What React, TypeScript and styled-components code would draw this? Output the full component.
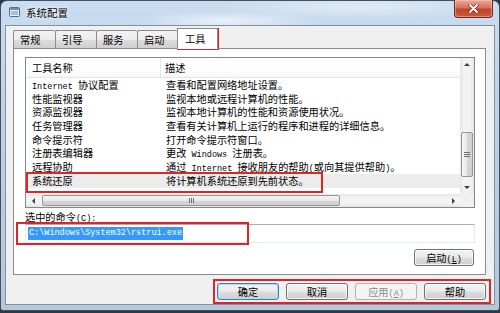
import React from 'react';
import styled, { createGlobalStyle, css } from 'styled-components';

const CJK = '"Noto Sans CJK SC", "Noto Sans", sans-serif';
const MONO = '"Liberation Mono", "DejaVu Sans Mono", monospace';

const CJK_SIZE = '10.2px';
const MONO_SIZE = '8.5px';
const ROW_HEIGHT = '13.7px';
const ANNOTATION_RED = '#d8262a';

const TABS = ['常规', '引导', '服务', '启动', '工具'];
const TAB_WIDTHS = [42, 41, 41, 40, 41];
const ACTIVE_TAB = 4;

const TOOLS: [string, string][] = [
  ['Internet 协议配置', '查看和配置网络地址设置。'],
  ['性能监视器', '监视本地或远程计算机的性能。'],
  ['资源监视器', '监视本地计算机的性能和资源使用状况。'],
  ['任务管理器', '查看有关计算机上运行的程序和进程的详细信息。'],
  ['命令提示符', '打开命令提示符窗口。'],
  ['注册表编辑器', '更改 Windows 注册表。'],
  ['远程协助', '通过 Internet 接收朋友的帮助(或向其提供帮助)。'],
  ['系统还原', '将计算机系统还原到先前状态。'],
];
const SELECTED_ROW = 7;

const GlobalStyle = createGlobalStyle`
  html, body {
    margin: 0;
    padding: 0;
    background: #2f3842;
  }
  body {
    width: 500px;
    height: 313px;
    overflow: hidden;
    font-family: ${CJK};
    color: #000;
  }
`;

const Window = styled.div`
  position: relative;
  box-sizing: border-box;
  width: 500px;
  height: 311px;
  border: 1px solid #43515f;
  border-radius: 7px 7px 3px 3px;
  display: flex;
  flex-direction: column;
  background:
    radial-gradient(ellipse 90px 10px at 225px 20px, rgba(255, 255, 255, 0.6), transparent),
    radial-gradient(ellipse 140px 12px at 360px 6px, rgba(255, 255, 255, 0.45), transparent),
    linear-gradient(180deg, #cadcef 0%, #bcd1e7 45%, #b3c8dc 100%);
`;

const TitleBar = styled.div`
  height: 24px;
  flex: none;
  display: flex;
  align-items: flex-start;
  padding-left: 8px;
`;

const TitleIcon = styled.svg`
  margin-top: 6px;
  width: 11px;
  height: 10px;
  flex: none;
`;

const Title = styled.span`
  margin: 5px 0 0 6px;
  font-size: 10.5px;
  line-height: 14px;
  text-shadow: 0 0 5px #fff, 0 0 3px #fff;
`;

const CloseButton = styled.div`
  margin: -1px 6px 0 auto;
  width: 39px;
  height: 18px;
  box-sizing: border-box;
  border: 1px solid #6b2c24;
  border-top: none;
  border-radius: 0 0 4px 4px;
  background: linear-gradient(180deg, #e9a99a 0%, #d7725d 45%, #c2432b 55%, #c9593c 100%);
  box-shadow: inset 0 0 0 1px rgba(255, 210, 200, 0.45);
  display: flex;
  align-items: center;
  justify-content: center;
`;

const Client = styled.div`
  flex: 1;
  margin: 0 4px 5px;
  border: 1px solid #7f91a4;
  background: #f0f0f0;
  display: flex;
  flex-direction: column;
  padding: 3px 8px 0 7px;
`;

const TabStrip = styled.div`
  display: flex;
  align-items: flex-end;
  flex: none;
  height: 20px;
  margin-bottom: -1px;
  position: relative;
  z-index: 1;
`;

const Tab = styled.div<{ $active?: boolean; $width: number }>`
  box-sizing: border-box;
  width: ${({ $width }) => $width}px;
  height: 19px;
  border: 1px solid #898c95;
  border-right: none;
  border-radius: 2px 2px 0 0;
  background: linear-gradient(180deg, #f3f3f3 0%, #ebebeb 50%, #dddddd 51%, #cfcfcf 100%);
  font-size: ${CJK_SIZE};
  line-height: 17px;
  padding-left: 6px;
  ${({ $active }) =>
    $active &&
    css`
      height: 21px;
      border-right: 1px solid #898c95;
      border-bottom-color: #fff;
      background: #fff;
      padding-left: 7px;
      line-height: 19px;
    `}
`;

const Panel = styled.div`
  box-sizing: border-box;
  flex: none;
  height: 227px;
  border: 1px solid #898c95;
  background: #fff;
  padding: 8px 10px 0 11px;
  display: flex;
  flex-direction: column;
`;

const ListView = styled.div`
  box-sizing: border-box;
  flex: none;
  height: 151px;
  border: 1px solid #828790;
  display: grid;
  grid-template-columns: 1fr 14px;
  grid-template-rows: 1fr 13px;
  overflow: hidden;
`;

const ListBody = styled.div`
  overflow: hidden;
`;

const HeaderRow = styled.div`
  display: flex;
  height: 20px;
  box-sizing: border-box;
  border-bottom: 1px solid #e5e5e5;
  background: linear-gradient(180deg, #ffffff 0%, #ffffff 60%, #f6f7f8 100%);
  font-size: ${CJK_SIZE};
  line-height: 20px;
`;

const HeaderCell = styled.div<{ $width?: number }>`
  box-sizing: border-box;
  ${({ $width }) =>
    $width
      ? css`
          width: ${$width}px;
          border-right: 1px solid #e3e8ee;
          padding-left: 6px;
        `
      : css`
          flex: 1;
          padding-left: 4px;
        `}
`;

const Row = styled.div<{ $selected?: boolean }>`
  display: flex;
  height: ${ROW_HEIGHT};
  font-size: ${CJK_SIZE};
  line-height: ${ROW_HEIGHT};
  white-space: nowrap;
  background: ${({ $selected }) => ($selected ? '#ececec' : 'transparent')};
`;

const NameCell = styled.div`
  width: 135px;
  flex: none;
  padding-left: 6px;
  box-sizing: border-box;
`;

const DescCell = styled.div`
  padding-left: 5px;
`;

const Mono = styled.span`
  font-family: ${MONO};
  font-size: ${MONO_SIZE};
  line-height: 1;
`;

const ScrollTrack = styled.div<{ $vertical?: boolean }>`
  display: flex;
  flex-direction: ${({ $vertical }) => ($vertical ? 'column' : 'row')};
  background: ${({ $vertical }) =>
    $vertical
      ? 'linear-gradient(90deg, #e6e6e6, #f3f3f3 30%, #f3f3f3 70%, #e6e6e6)'
      : 'linear-gradient(180deg, #e6e6e6, #f3f3f3 30%, #f3f3f3 70%, #e6e6e6)'};
`;

const ArrowBox = styled.div`
  width: 14px;
  height: 13px;
  flex: none;
  display: flex;
  align-items: center;
  justify-content: center;
`;

const Arrow = styled.div<{ $dir: 'up' | 'down' | 'left' | 'right' }>`
  width: 0;
  height: 0;
  ${({ $dir }) => {
    switch ($dir) {
      case 'up':
        return css`
          border-left: 3px solid transparent;
          border-right: 3px solid transparent;
          border-bottom: 3px solid #3d3d3d;
        `;
      case 'down':
        return css`
          border-left: 3px solid transparent;
          border-right: 3px solid transparent;
          border-top: 3px solid #3d3d3d;
        `;
      case 'left':
        return css`
          border-top: 3px solid transparent;
          border-bottom: 3px solid transparent;
          border-right: 3px solid #3d3d3d;
        `;
      default:
        return css`
          border-top: 3px solid transparent;
          border-bottom: 3px solid transparent;
          border-left: 3px solid #3d3d3d;
        `;
    }
  }}
`;

const TrackSpace = styled.div`
  flex: 1;
  display: flex;
  flex-direction: inherit;
`;

const Thumb = styled.div<{ $vertical?: boolean; $offset: number; $size: number }>`
  box-sizing: border-box;
  flex: none;
  border: 1px solid #979797;
  border-radius: 2px;
  display: flex;
  align-items: center;
  justify-content: center;
  ${({ $vertical, $offset, $size }) =>
    $vertical
      ? css`
          margin: ${$offset}px 1px 0;
          height: ${$size}px;
          background: linear-gradient(90deg, #f4f4f4, #e8e8e8 50%, #d6d6d6 51%, #cfcfcf);
        `
      : css`
          margin: 1px 0 1px ${$offset}px;
          width: ${$size}px;
          background: linear-gradient(180deg, #f4f4f4, #e8e8e8 50%, #d6d6d6 51%, #cfcfcf);
        `}
`;

const Grip = styled.div<{ $vertical?: boolean }>`
  display: flex;
  flex-direction: ${({ $vertical }) => ($vertical ? 'column' : 'row')};
  gap: 1px;
  & > i {
    display: block;
    background: #6f6f6f;
    ${({ $vertical }) =>
      $vertical
        ? css`
            width: 6px;
            height: 1px;
          `
        : css`
            width: 1px;
            height: 5px;
          `}
  }
`;

const Corner = styled.div`
  background: #f0f0f0;
`;

const FieldLabel = styled.div`
  flex: none;
  height: 13px;
  margin-top: 2px;
  font-size: ${CJK_SIZE};
  line-height: 13px;
  overflow: visible;
`;

const TextBox = styled.div`
  box-sizing: border-box;
  flex: none;
  height: 19px;
  margin-top: 1px;
  border: 1px solid #e3e9ef;
  border-top-color: #abadb3;
  padding: 0 2px;
  background: #fff;
  display: flex;
  align-items: center;
`;

const SelectedText = styled.span`
  font-family: ${MONO};
  font-size: ${MONO_SIZE};
  line-height: 13px;
  padding: 0 1px;
  background: #3399ff;
  color: #fff;
`;

const ActionRow = styled.div`
  display: flex;
  flex: none;
  justify-content: flex-end;
  margin-top: 6px;
  padding-right: 1px;
`;

const Footer = styled.div`
  display: flex;
  flex: none;
  justify-content: flex-end;
  gap: 7px;
  padding-top: 8px;
`;

const Button = styled.div<{ $primary?: boolean; $disabled?: boolean; $width?: number }>`
  box-sizing: border-box;
  width: ${({ $width }) => $width ?? 62}px;
  height: 17px;
  border: 1px solid #707070;
  border-radius: 3px;
  background: linear-gradient(180deg, #f2f2f2 0%, #ebebeb 48%, #dddddd 52%, #cfcfcf 100%);
  box-shadow: inset 0 0 0 1px rgba(255, 255, 255, 0.75);
  font-size: ${CJK_SIZE};
  line-height: 15px;
  text-align: center;
  white-space: nowrap;
  ${({ $primary }) =>
    $primary &&
    css`
      border-color: #3c7fb1;
      box-shadow: inset 0 0 0 1px #a8dcf5;
    `}
  ${({ $disabled }) =>
    $disabled &&
    css`
      border-color: #adb2b5;
      background: #f4f4f4;
      box-shadow: none;
      color: #8b8b8b;
    `}
`;

const Annotation = styled.div<{ $x: number; $y: number; $w: number; $h: number }>`
  position: absolute;
  left: ${({ $x }) => $x - 1}px;
  top: ${({ $y }) => $y - 1}px;
  width: ${({ $w }) => $w}px;
  height: ${({ $h }) => $h}px;
  box-sizing: border-box;
  border: 2px solid ${ANNOTATION_RED};
  pointer-events: none;
`;

// split text so latin runs get the half-width mono face, like SimSun does
const mixed = (text: string) =>
  text.split(/([\x20-\x7e]+)/).map((part, i) =>
    /[\x20-\x7e]/.test(part) ? <Mono key={i}>{part}</Mono> : <React.Fragment key={i}>{part}</React.Fragment>,
  );

const ScrollV = () => (
  <ScrollTrack $vertical>
    <ArrowBox>
      <Arrow $dir="up" />
    </ArrowBox>
    <TrackSpace>
      <Thumb $vertical $offset={61} $size={45}>
        <Grip $vertical>
          <i />
          <i />
          <i />
        </Grip>
      </Thumb>
    </TrackSpace>
    <ArrowBox>
      <Arrow $dir="down" />
    </ArrowBox>
  </ScrollTrack>
);

const ScrollH = () => (
  <ScrollTrack>
    <ArrowBox>
      <Arrow $dir="left" />
    </ArrowBox>
    <TrackSpace>
      <Thumb $offset={2} $size={298}>
        <Grip>
          <i />
          <i />
          <i />
        </Grip>
      </Thumb>
    </TrackSpace>
    <ArrowBox>
      <Arrow $dir="right" />
    </ArrowBox>
  </ScrollTrack>
);

export default function App() {
  return (
    <>
      <GlobalStyle />
      <Window>
        <TitleBar>
          <TitleIcon viewBox="0 0 11 10">
            <rect x="0.5" y="0.5" width="10" height="9" rx="1" fill="#e9eef4" stroke="#5d6b7a" />
            <rect x="1" y="1" width="9" height="2" fill="#6c8fb8" />
            <rect x="2" y="4" width="7" height="4" fill="#9fc1e3" />
          </TitleIcon>
          <Title>系统配置</Title>
          <CloseButton>
            <svg width="11" height="9" viewBox="0 0 11 9">
              <path d="M2 1 L9 8 M9 1 L2 8" stroke="#7a2a1e" strokeWidth="3.2" strokeLinecap="round" />
              <path d="M2 1 L9 8 M9 1 L2 8" stroke="#fff" strokeWidth="1.8" strokeLinecap="round" />
            </svg>
          </CloseButton>
        </TitleBar>
        <Client>
          <TabStrip>
            {TABS.map((t, i) => (
              <Tab key={t} $active={i === ACTIVE_TAB} $width={TAB_WIDTHS[i]}>
                {t}
              </Tab>
            ))}
          </TabStrip>
          <Panel>
            <ListView>
              <ListBody>
                <HeaderRow>
                  <HeaderCell $width={135}>工具名称</HeaderCell>
                  <HeaderCell>描述</HeaderCell>
                </HeaderRow>
                {TOOLS.map(([name, desc], i) => (
                  <Row key={name} $selected={i === SELECTED_ROW}>
                    <NameCell>{mixed(name)}</NameCell>
                    <DescCell>{mixed(desc)}</DescCell>
                  </Row>
                ))}
              </ListBody>
              <ScrollV />
              <ScrollH />
              <Corner />
            </ListView>
            <FieldLabel>
              选中的命令<Mono>(<u>C</u>):</Mono>
            </FieldLabel>
            <TextBox>
              <SelectedText>C:\Windows\System32\rstrui.exe</SelectedText>
            </TextBox>
            <ActionRow>
              <Button $width={60}>
                启动<Mono>(<u>L</u>)</Mono>
              </Button>
            </ActionRow>
          </Panel>
          <Footer>
            <Button $primary>确定</Button>
            <Button>取消</Button>
            <Button $disabled>
              应用<Mono>(<u>A</u>)</Mono>
            </Button>
            <Button>帮助</Button>
          </Footer>
        </Client>
        <Annotation $x={177} $y={28} $w={42} $h={22} />
        <Annotation $x={26} $y={172} $w={297} $h={21} />
        <Annotation $x={16} $y={222} $w={233} $h={23} />
        <Annotation $x={213} $y={279} $w={278} $h={25} />
      </Window>
    </>
  );
}
